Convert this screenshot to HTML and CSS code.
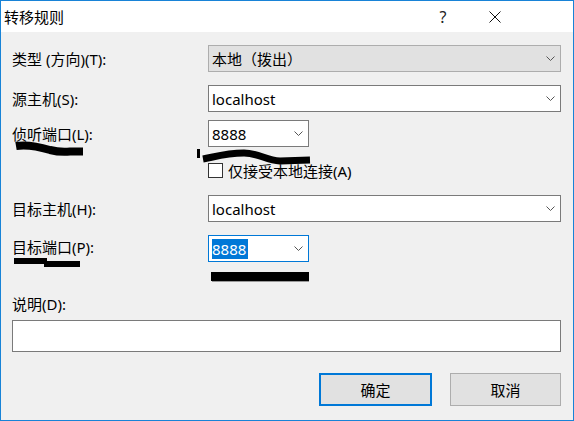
FILE: index.html
```html
<!DOCTYPE html>
<html lang="zh-CN">
<head>
<meta charset="utf-8">
<title>转移规则</title>
<link rel="stylesheet" href="styles.css">
</head>
<body>
<div class="window">
  <div class="titlebar">
    <span class="title">转移规则</span>
    <span class="help">?</span>
    <span class="close">
      <svg width="12" height="12" viewBox="0 0 12 12"><path d="M0.5 0.5 L11.5 11.5 M11.5 0.5 L0.5 11.5" stroke="#111" stroke-width="1" fill="none"/></svg>
    </span>
  </div>
  <div class="content">
    <div class="row row-first">
      <span class="lbl">类型 (方向)(T):</span>
      <div class="combo combo-ro combo-wide"><span class="val">本地（拨出）</span><span class="drop"><svg width="9" height="5" viewBox="0 0 9 5"><polyline points="0.5,0.5 4.5,4.5 8.5,0.5" fill="none" stroke="#555" stroke-width="1"/></svg></span></div>
    </div>
    <div class="row row-gap13">
      <span class="lbl">源主机(S):</span>
      <div class="combo combo-wide"><span class="val">localhost</span><span class="drop"><svg width="9" height="5" viewBox="0 0 9 5"><polyline points="0.5,0.5 4.5,4.5 8.5,0.5" fill="none" stroke="#555" stroke-width="1"/></svg></span></div>
    </div>
    <div class="row row-gap8">
      <span class="lbl">侦听端口(L):</span>
      <div class="combo combo-small"><span class="val">8888</span><span class="drop"><svg width="9" height="5" viewBox="0 0 9 5"><polyline points="0.5,0.5 4.5,4.5 8.5,0.5" fill="none" stroke="#555" stroke-width="1"/></svg></span></div>
    </div>
    <div class="checkrow">
      <span class="checkbox"></span>
      <span class="checklbl">仅接受本地连接(A)</span>
    </div>
    <div class="row row-gap17">
      <span class="lbl">目标主机(H):</span>
      <div class="combo combo-wide"><span class="val">localhost</span><span class="drop"><svg width="9" height="5" viewBox="0 0 9 5"><polyline points="0.5,0.5 4.5,4.5 8.5,0.5" fill="none" stroke="#555" stroke-width="1"/></svg></span></div>
    </div>
    <div class="row row-gap13">
      <span class="lbl lbl-up">目标端口(P):</span>
      <div class="combo combo-small combo-focus"><span class="val"><span class="sel">8888</span></span><span class="drop"><svg width="9" height="5" viewBox="0 0 9 5"><polyline points="0.5,0.5 4.5,4.5 8.5,0.5" fill="none" stroke="#555" stroke-width="1"/></svg></span></div>
    </div>
    <div class="desclbl">说明(D):</div>
    <div class="textbox"></div>
    <div class="buttons">
      <button class="btn btn-default">确定</button>
      <button class="btn">取消</button>
    </div>
  </div>
  <svg class="marks" width="574" height="421" viewBox="0 0 574 421">
    <path d="M16 146 C28 144 40 147 50 150 C58 152 64 152 70 151.5 L83 151.5" stroke="#000" stroke-width="8" fill="none" stroke-linecap="butt"/>
    <rect x="197" y="149" width="3" height="9" fill="#000"/>
    <path d="M203 159 C214 157 226 153 244 153 C258 153 266 160 280 161 L310 160" stroke="#000" stroke-width="7" fill="none"/>
    <path d="M14 261 L47 261 M44 264 L80 264" stroke="#000" stroke-width="6" fill="none"/>
    <rect x="211" y="272" width="98" height="9" fill="#000"/>
    <rect x="212" y="281" width="97" height="1" fill="#999"/>
  </svg>
</div>
</body>
</html>
```

FILE: styles.css
```css
html, body {
  margin: 0;
  padding: 0;
  background: #f0f0f0;
}

.window {
  position: relative;
  width: 574px;
  height: 421px;
  box-sizing: border-box;
  border: 1px solid #1883d7;
  background: #f0f0f0;
  font-family: "Noto Sans", "Noto Sans CJK SC", sans-serif;
  font-size: 15px;
  color: #000;
  overflow: hidden;
}

.titlebar {
  height: 31px;
  background: #fff;
  display: flex;
  align-items: center;
}

.title {
  flex: 1;
  padding-left: 3px;
  font-size: 15px;
}

.help {
  width: 20px;
  text-align: center;
  font-size: 16px;
  color: #222;
}

.close {
  width: 22px;
  margin-left: 31px;
  margin-right: 67px;
  display: flex;
  justify-content: center;
  align-items: center;
}

.content {
  padding: 0 12px 0 11px;
}

.row {
  display: flex;
  align-items: center;
  height: 27px;
}

.row-first { margin-top: 13px; }
.row-gap13 { margin-top: 13px; }
.row-gap8 { margin-top: 8px; }
.row-gap17 { margin-top: 17px; }

.lbl {
  width: 196px;
  flex: none;
  padding-top: 1px;
  line-height: 20px;
}

.lbl-up {
  padding-top: 0;
  padding-bottom: 3px;
}

.combo {
  box-sizing: border-box;
  height: 27px;
  border: 1px solid #7a7a7a;
  background: #fff;
  display: flex;
  align-items: center;
  padding-left: 3px;
}

.combo-wide { width: 353px; }
.combo-small { width: 101px; }

.combo-ro {
  background: #e1e1e1;
  border-color: #adadad;
}

.combo-focus {
  border-color: #0078d7;
}

.val {
  flex: 1;
  line-height: 20px;
  white-space: nowrap;
}

.sel {
  display: inline-block;
  background: #0078d7;
  color: #fff;
  padding-right: 2px;
  line-height: 20px;
}

.drop {
  width: 19px;
  height: 100%;
  display: flex;
  align-items: center;
  justify-content: center;
}

.drop svg { display: block; }

.checkrow {
  display: flex;
  align-items: center;
  height: 15px;
  margin-top: 16px;
  padding-left: 196px;
}

.checkbox {
  box-sizing: border-box;
  width: 15px;
  height: 15px;
  border: 1px solid #333;
  background: #fff;
  margin-right: 5px;
  flex: none;
}

.checklbl {
  line-height: 20px;
}

.desclbl {
  margin-top: 32px;
  line-height: 20px;
}

.textbox {
  box-sizing: border-box;
  margin-top: 6px;
  width: 549px;
  height: 32px;
  border: 1px solid #7a7a7a;
  background: #fff;
}

.buttons {
  display: flex;
  justify-content: flex-end;
  gap: 18px;
  margin-top: 21px;
  width: 549px;
}

.btn {
  box-sizing: border-box;
  width: 111px;
  height: 33px;
  border: 1px solid #adadad;
  background: #e1e1e1;
  font-family: inherit;
  font-size: 15px;
  color: #000;
  padding: 0;
  margin: 0;
}

.btn-default {
  width: 113px;
  border: 2px solid #0078d7;
}

.marks {
  position: absolute;
  left: -1px;
  top: -1px;
  pointer-events: none;
}
```
